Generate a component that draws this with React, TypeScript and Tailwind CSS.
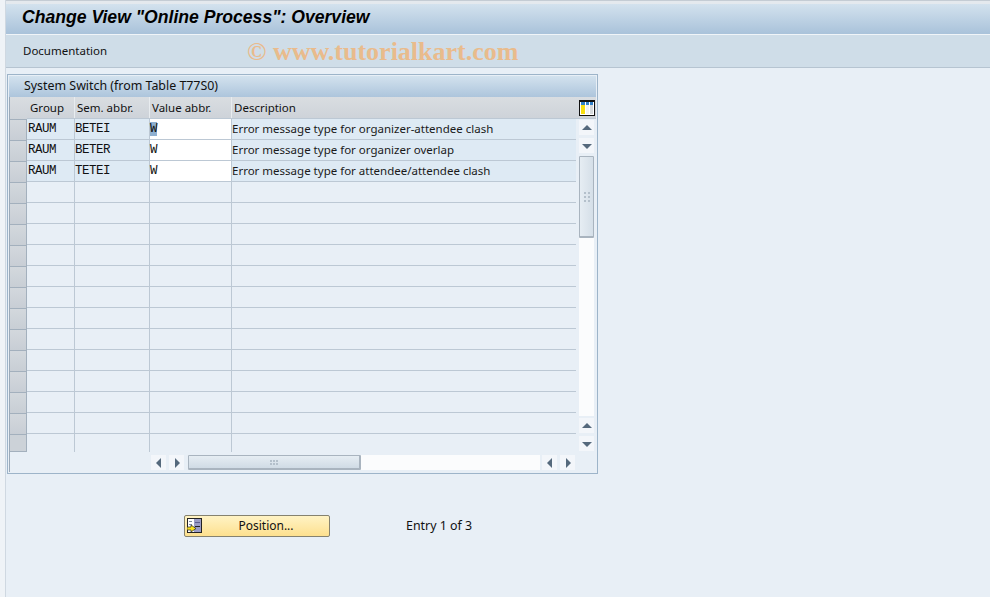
const font = "[font-family:'Noto_Sans',sans-serif]";

const rows = [
  { group: "RAUM", sem: "BETEI", value: "W", text: "Error message type for organizer-attendee clash", active: true },
  { group: "RAUM", sem: "BETER", value: "W", text: "Error message type for organizer overlap" },
  { group: "RAUM", sem: "TETEI", value: "W", text: "Error message type for attendee/attendee clash" },
];

function Arrow({ dir }: { dir: "up" | "down" | "left" | "right" }) {
  const points = {
    up: "1,8 6,3 11,8",
    down: "1,4 11,4 6,9",
    left: "8,1 8,11 3,6",
    right: "4,1 4,11 9,6",
  }[dir];
  return (
    <button className="flex h-[15px] w-[15px] items-center justify-center bg-[#f3f6fa]">
      <svg width="12" height="12" viewBox="0 0 12 12">
        <polygon points={points} fill="#55697c" />
      </svg>
    </button>
  );
}

function Grip({ vertical }: { vertical?: boolean }) {
  return (
    <div className={vertical ? "grid grid-cols-2 gap-[2px]" : "grid grid-cols-3 gap-[1px]"}>
      {Array.from({ length: 6 }).map((_, i) => (
        <span key={i} className="h-[2px] w-[2px] bg-[#b4c0cb]" />
      ))}
    </div>
  );
}

function SelectorColumn() {
  return (
    <div className="flex w-[18px] flex-col border-l border-[#9aa9b8]">
      <div className="h-[22px] bg-gradient-to-b from-[#d9dde1] to-[#ced3d9]" />
      {Array.from({ length: 16 }).map((_, i) => (
        <div
          key={i}
          className={
            i === 15
              ? "h-[18px] border-y border-r border-[#a3b0bd] bg-[#ccd2d8]"
              : "h-[21px] border-t border-r border-[#a3b0bd] bg-gradient-to-b from-[#d3d8dd] to-[#c8ced5]"
          }
        />
      ))}
    </div>
  );
}

function Row({ cells, active, last }: { cells?: (typeof rows)[number]; active?: boolean; last?: boolean }) {
  const bg = cells ? "bg-[#deeaf4]" : "";
  const line = last ? "h-[18px]" : "h-[21px] border-b border-[#bcc8d4]";
  const mono = "pt-[1px] font-['Liberation_Mono',monospace] text-[12.5px] leading-[19px] tracking-[-0.5px] text-[#111]";
  return (
    <div className={`flex ${line} ${bg}`}>
      <div className={`w-[48px] border-r border-[#bcc8d4] pl-[1px] ${mono}`}>{cells?.group}</div>
      <div className={`w-[75px] border-r border-[#bcc8d4] ${mono}`}>{cells?.sem}</div>
      <div className={`w-[82px] border-r border-[#bcc8d4] ${mono} ${cells ? "bg-white" : ""}`}>
        {cells && <span className={active ? "bg-[#8fb0d0]" : ""}>{cells.value}</span>}
      </div>
      <div className="flex-1 text-[11.5px] leading-[20px] text-[#1a1a1a]">{cells?.text}</div>
    </div>
  );
}

function ColumnsIcon() {
  return (
    <svg width="16" height="16" viewBox="0 0 16 16" className="mr-[1px]">
      <rect x="0.5" y="0.5" width="15" height="15" fill="#fff" stroke="#111" />
      <rect x="1" y="1" width="14" height="1" fill="#111" />
      <rect x="2" y="2" width="4" height="3" fill="#2f7fc8" />
      <rect x="7" y="2" width="3" height="3" fill="#2f7fc8" />
      <rect x="11" y="2" width="3" height="3" fill="#2f7fc8" />
      <rect x="2" y="5" width="4" height="9" fill="#f7de10" />
      <rect x="7" y="5" width="3" height="9" fill="#f2f2f2" />
      <rect x="11" y="5" width="3" height="9" fill="#d6dadd" />
    </svg>
  );
}

function PositionIcon() {
  return (
    <svg width="15" height="15" viewBox="0 0 15 15">
      <rect x="0.5" y="0.5" width="14" height="14" fill="#fff" stroke="#222" />
      <rect x="7" y="1" width="7" height="13" fill="#9a9cc6" />
      <rect x="8" y="8" width="5" height="1" fill="#222" />
      <rect x="8" y="4" width="5" height="1" fill="#5c5e90" />
      <path d="M2 3h3v1H2zM2 6h3v1H2z" fill="#7c8aa0" />
      <polygon points="0,9 4,9 4,7 9,10.5 4,14 4,12 0,12" fill="#f8e020" stroke="#222" strokeWidth="0.7" />
    </svg>
  );
}

export default function App() {
  return (
    <div className={`relative flex h-[597px] w-[990px] overflow-hidden bg-[#e8eff6] ${font} text-[12px] text-[#111]`}>
      <div className="w-[6px] shrink-0 border-r border-[#cfd8e1] bg-[#eff3f7]" />
      <div className="flex min-w-0 flex-1 flex-col">
        <div className="h-[4px] border-t border-[#c4ccd4] bg-[#e4e9ee]" />
        <div className="flex h-[30px] items-center bg-gradient-to-b from-[#d3e2ee] to-[#a9c2da] pb-[2px] pl-[16px] font-['Liberation_Sans',sans-serif] text-[17.6px] font-bold italic leading-none text-black">
          Change View "Online Process": Overview
        </div>
        <div className="flex h-[33px] items-center border-t border-[#f0f4f8] bg-[#cfdde8] pl-[17px] text-[11.5px]">
          Documentation
        </div>
        <div className="h-[1px] bg-[#b6c4d1]" />

        <div className="ml-[1px] mt-[6px] flex h-[400px] w-[591px] flex-col border border-[#9db4c9] p-[1px]">
          <div className="flex h-[21px] shrink-0 items-center bg-gradient-to-b from-[#d3e2ee] to-[#adc5dc] pb-[1px] pl-[15px] text-[12.4px]">
            System Switch (from Table T77S0)
          </div>
          <div className="flex flex-1">
            <SelectorColumn />
            <div className="flex min-w-0 flex-1 flex-col">
              <div className="flex h-[22px] border-b border-[#bcc8d4] bg-gradient-to-b from-[#d9dde1] to-[#ced3d9] text-[11.5px] leading-[22px]">
                <div className="w-[48px] border-r border-[#e8ecef] pl-[3px]">Group</div>
                <div className="w-[75px] border-r border-[#e8ecef] pl-[2px]">Sem. abbr.</div>
                <div className="w-[82px] border-r border-[#e8ecef] pl-[2px]">Value abbr.</div>
                <div className="flex flex-1 items-center justify-between pl-[2px]">
                  <span>Description</span>
                  <ColumnsIcon />
                </div>
              </div>
              <div className="flex flex-1">
                <div className="flex w-[549px] flex-col">
                  {rows.map((r, i) => (
                    <Row key={i} cells={r} active={r.active} />
                  ))}
                  {Array.from({ length: 13 }).map((_, i) => (
                    <Row key={i} last={i === 12} />
                  ))}
                  <div className="mt-[3px] flex h-[15px] items-center">
                    <div className="w-[124px]" />
                    <Arrow dir="left" />
                    <div className="w-[3px]" />
                    <Arrow dir="right" />
                    <div className="ml-[4px] flex h-[15px] flex-1 items-center bg-[#fbfcfd]">
                      <div className="flex h-[15px] w-[173px] items-center justify-center rounded-[1px] border-r-2 border-b-2 border-l border-t border-[#a9b4bf] bg-gradient-to-b from-[#e6edf3] to-[#d0dbe5]">
                        <Grip />
                      </div>
                    </div>
                    <div className="w-[2px]" />
                    <Arrow dir="left" />
                    <div className="w-[3px]" />
                    <Arrow dir="right" />
                    <div className="w-[1px]" />
                  </div>
                </div>
                <div className="ml-[3px] flex w-[15px] flex-col items-center pt-[1px]">
                  <Arrow dir="up" />
                  <div className="h-[3px]" />
                  <Arrow dir="down" />
                  <div className="mt-[3px] flex h-[260px] w-[15px] flex-col bg-[#fbfcfd]">
                    <div className="flex h-[82px] items-center justify-center rounded-[1px] border border-b-2 border-[#a9b4bf] bg-gradient-to-r from-[#e6edf3] to-[#d5dfe8]">
                      <Grip vertical />
                    </div>
                  </div>
                  <div className="h-[2px]" />
                  <Arrow dir="up" />
                  <div className="h-[3px]" />
                  <Arrow dir="down" />
                </div>
              </div>
            </div>
          </div>
        </div>

        <div className="ml-[178px] mt-[41px] flex h-[22px] items-center">
          <button className="relative flex h-[22px] w-[146px] items-center justify-center rounded-[2px] border border-[#85826f] bg-gradient-to-b from-[#fff3c4] to-[#fde08e] pl-[18px] text-[12px]">
            <span className="absolute left-[2px] top-[2px] flex">
              <PositionIcon />
            </span>
            Position...
          </button>
          <span className="ml-[76px] pt-[1px] text-[12.4px]">Entry 1 of 3</span>
        </div>
      </div>

      <div className="absolute left-[247px] top-[38px] font-['Liberation_Serif',serif] text-[26px] font-bold leading-[28px] text-[#e9bb8c]">
        © www.tutorialkart.com
      </div>
    </div>
  );
}
